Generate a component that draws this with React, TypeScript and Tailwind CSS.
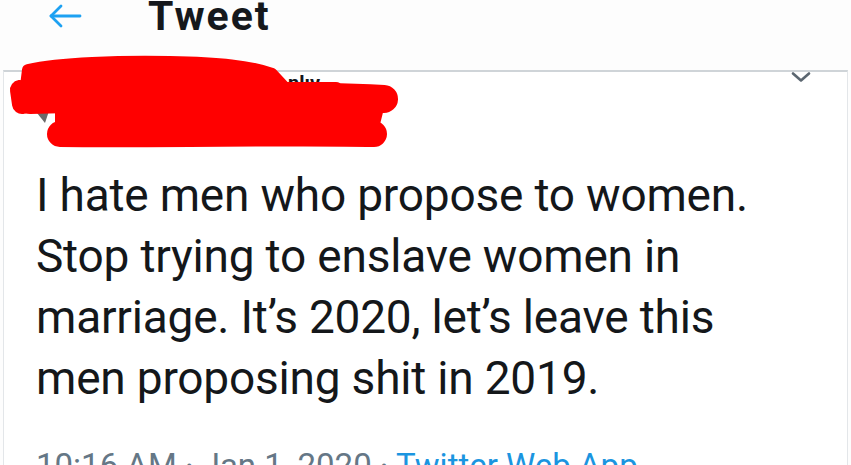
import React from "react";

const font = { fontFamily: "Roboto, 'Liberation Sans', sans-serif" };

function BackArrow() {
  return (
    <svg width="36" height="26" viewBox="0 0 36 26" fill="none" stroke="#1da1f2" strokeWidth="2.8" strokeLinecap="round" strokeLinejoin="round">
      <path d="M33 12H4" />
      <path d="M14 2L4 12l10 10" />
    </svg>
  );
}

function Chevron() {
  return (
    <svg width="20" height="10" viewBox="0 0 20 10" fill="none" stroke="#5b6670" strokeWidth="2.6" strokeLinecap="round" strokeLinejoin="round">
      <path d="M2 1.5l8 7 8-7" />
    </svg>
  );
}

// the red marker scribble over the name
function Scribble() {
  return (
    <svg className="absolute left-0 top-0 pointer-events-none" width="851" height="465" viewBox="0 0 851 465">
      <path d="M37 113l12-2-4 12z" fill="#6b6b6b" />
      <g fill="#ff0000" stroke="#ff0000" strokeLinecap="round" strokeLinejoin="round">
        <path d="M28 70C60 63 120 61 170 62C220 63 250 66 272 74L285 88L336 88L340 102L24 102Z" strokeWidth="12" />
        <path d="M20 90L22 104" strokeWidth="20" />
        <path d="M30 100C150 97 280 94 384 99" strokeWidth="28" fill="none" />
        <path d="M60 134C180 135 300 132 374 134" strokeWidth="26" fill="none" />
        <path d="M58 112L380 112L376 128L58 128Z" strokeWidth="6" />
      </g>
    </svg>
  );
}

export default function App() {
  return (
    <div className="relative w-[851px] h-[465px] overflow-hidden bg-[#fdfdfd]" style={font}>
      <div className="h-[70px] flex items-start">
        <div className="ml-[47px] mt-[4px]">
          <BackArrow />
        </div>
        <div className="ml-[65px] -mt-[14px] text-[41px] font-bold text-[#15181c] tracking-[2px]">Tweet</div>
      </div>

      <div className="mx-[3px] h-[395px] border-t-2 border-x border-t-[#cfd4d8] border-x-[#e3e6e9] bg-white">
        <div className="relative h-[93px]">
          <span className="absolute left-[284px] top-[-4px] text-[20px] font-bold text-[#14171a]">nlıv</span>
          <div className="absolute right-[36px] top-0">
            <Chevron />
          </div>
        </div>
        <p className="pl-[32px] text-[46px] leading-[61px] text-[#14171a] tracking-[-0.2px]">
          I hate men who propose to women.
          <br />
          Stop trying to enslave women in
          <br />
          marriage. It’s 2020, let’s leave this
          <br />
          men proposing shit in 2019.
        </p>
        <div className="pl-[32px] mt-[32px] text-[33px] text-[#657786] whitespace-nowrap">
          10:16 AM · Jan 1, 2020 · <span className="text-[#1b95e0]">Twitter Web App</span>
        </div>
      </div>

      <Scribble />
    </div>
  );
}
